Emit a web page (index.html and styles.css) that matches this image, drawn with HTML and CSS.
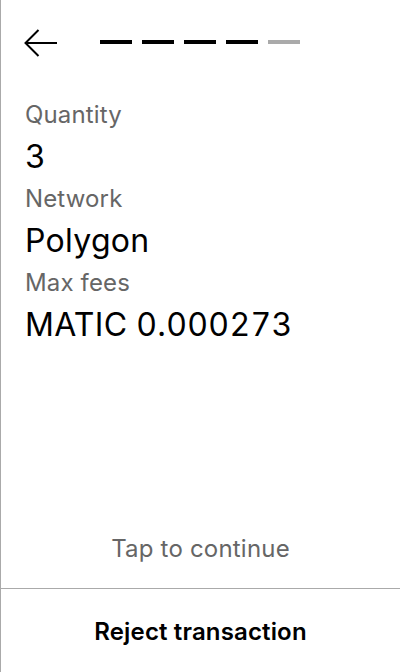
FILE: index.html
```html
<!DOCTYPE html>
<html>
<head>
<meta charset="utf-8">
<link rel="stylesheet" href="styles.css">
</head>
<body>
<div class="screen">
  <div class="header">
    <svg class="back" width="34" height="29" viewBox="24 29 34 29">
      <path d="M25 43 H57 M38.5 30 L25.5 43 L38.5 56" fill="none" stroke="#000" stroke-width="2"/>
    </svg>
    <div class="steps">
      <span class="step done"></span>
      <span class="step done"></span>
      <span class="step done"></span>
      <span class="step done"></span>
      <span class="step"></span>
    </div>
  </div>
  <div class="details">
    <div class="label">Quantity</div>
    <div class="value">3</div>
    <div class="label">Network</div>
    <div class="value">Polygon</div>
    <div class="label">Max fees</div>
    <div class="value">MATIC 0.000273</div>
  </div>
  <div class="tap">Tap to continue</div>
  <div class="reject">Reject transaction</div>
</div>
</body>
</html>
```

FILE: styles.css
```css
* { box-sizing: border-box; }
html, body { margin: 0; padding: 0; background: #fff; }
body { font-family: Inter, "Noto Sans", sans-serif; color: #000; }
.screen {
  width: 400px;
  height: 672px;
  border-left: 1px solid #aaa;
  display: flex;
  flex-direction: column;
}
.header {
  display: flex;
  align-items: flex-start;
  padding: 29px 0 0 23px;
}
.back { display: block; }
.steps {
  display: flex;
  gap: 10px;
  margin-left: 42px;
  margin-top: 11px;
}
.step { display: block; width: 32px; height: 4px; background: #aaa; }
.step.done { background: #000; }
.details {
  flex: 1;
  padding: 43px 0 0 24px;
}
.label {
  font-size: 24px;
  line-height: 28px;
  letter-spacing: 0.15px;
  color: #666;
}
.value {
  font-size: 32px;
  line-height: 56px;
  letter-spacing: 0.3px;
  font-variant-numeric: tabular-nums;
  color: #000;
}
.tap {
  text-align: center;
  font-size: 24px;
  line-height: 28px;
  letter-spacing: 0.2px;
  color: #666;
  padding-bottom: 25px;
  border-bottom: 1px solid #aaa;
}
.reject {
  height: 83px;
  display: flex;
  align-items: center;
  justify-content: center;
  font-size: 24px;
  font-weight: 600;
  letter-spacing: 0.15px;
  padding-top: 1px;
}
```
